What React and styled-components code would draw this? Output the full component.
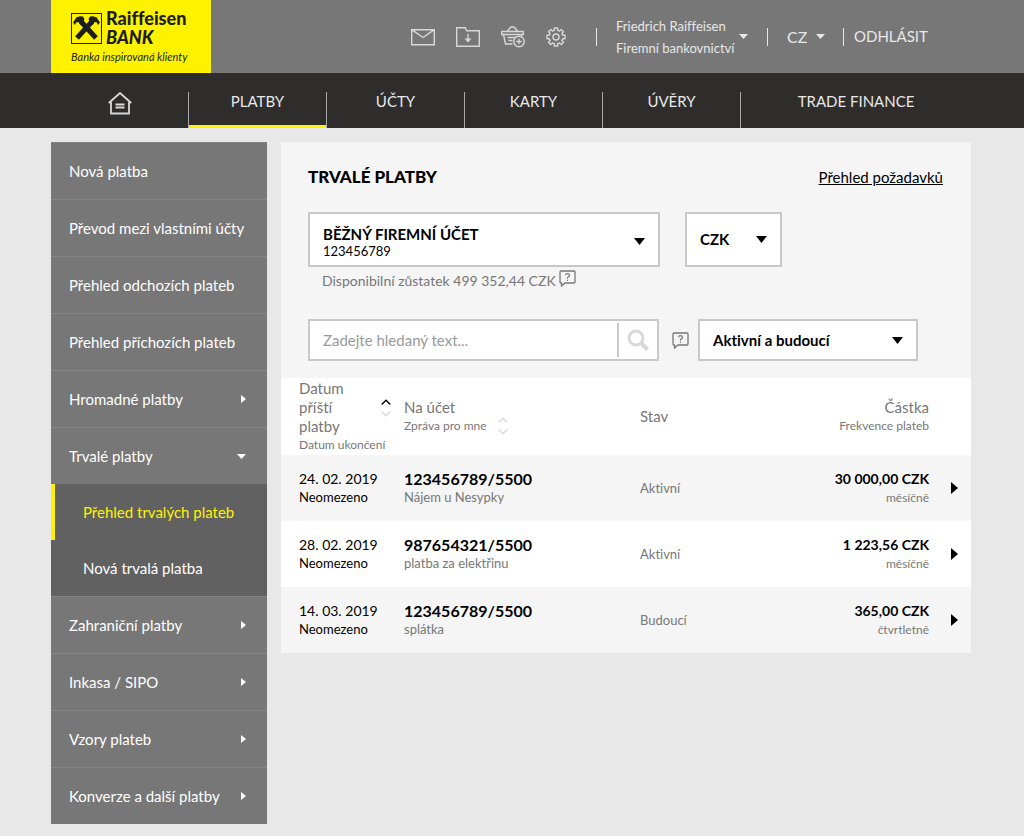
import React, { useState } from 'react'
import styled, { createGlobalStyle, css } from 'styled-components'

const GlobalStyle = createGlobalStyle`
  *, *::before, *::after {
    box-sizing: border-box;
  }

  body {
    margin: 0;
    background: #e8e8e8;
    color: #000;
    font-family: Lato, "Liberation Sans", sans-serif;
    font-size: 16px;
    line-height: 19px;
    font-variant-ligatures: none;
  }

  button, input, select {
    font: inherit;
    font-variant-ligatures: none;
    color: inherit;
    margin: 0;
    padding: 0;
    border: 0;
    background: none;
  }

  button, select {
    cursor: pointer;
  }

  ul {
    list-style: none;
    margin: 0;
    padding: 0;
  }
`

/* ---------- header ---------- */

const TopBar = styled.header`
  display: flex;
  align-items: stretch;
  justify-content: space-between;
  min-height: 73px;
  padding: 0 99px 0 51px;
  background: #777;
  color: #e8e8e8;
`

const Logo = styled.a`
  display: grid;
  grid-template-columns: 31px auto;
  align-content: start;
  align-items: center;
  column-gap: 4px;
  width: 160px;
  padding: 9px 0 0 20px;
  background: #fff200;
  color: #1d1d1b;
  text-decoration: none;
`

const LogoName = styled.span`
  display: flex;
  flex-direction: column;
  font-size: 18px;
  line-height: 19px;
  font-weight: 900;
  white-space: nowrap;
`

const LogoClaim = styled.span`
  grid-column: 1 / -1;
  font-size: 11px;
  line-height: 19px;
  font-style: italic;
  white-space: nowrap;
`

const Tools = styled.div`
  display: flex;
  align-items: center;
`

const IconBar = styled.nav`
  display: flex;
  align-items: center;
  gap: 21px;
  padding-right: 30px;
`

const IconButton = styled.button`
  display: flex;
`

const ToolBlock = styled.div`
  display: flex;
  align-items: center;
  gap: 9px;
  width: ${props => props.$width}px;
  padding-left: ${props => props.$indent}px;
  background: linear-gradient(#e8e8e8, #e8e8e8) left center / 1px 18px no-repeat;
`

const UserButton = styled.button`
  display: flex;
  align-items: center;
  gap: 5px;
  font-size: 13px;
  line-height: 22px;
  text-align: left;
  white-space: nowrap;
`

const LangSelect = styled.select`
  appearance: none;
  width: 20px;
`

const LogoutLink = styled.a`
  color: inherit;
  font-size: 15px;
  text-decoration: none;
`

/* ---------- main menu ---------- */

const MainNav = styled.nav`
  padding: 19px 53px 0 51px;
  background: #2e2d2c;

  ul {
    display: flex;
  }

  li {
    flex: 0 1 138px;
    border-left: 1px solid #aaa;
  }

  li:first-child {
    flex-basis: 137px;
    border-left: 0;
  }

  li:last-child {
    flex: 1 1 231px;
  }
`

const NavLink = styled.a`
  display: flex;
  justify-content: center;
  height: 36px;
  border-bottom: 3px solid ${props => (props.$active ? '#fff200' : 'transparent')};
  color: #e8e8e8;
  font-size: 15px;
  text-decoration: none;
  white-space: nowrap;
`

/* ---------- side menu ---------- */

const Page = styled.div`
  display: flex;
  align-items: flex-start;
  gap: 14px;
  padding: 14px 53px 12px 51px;
`

const SideMenu = styled.nav`
  flex: 0 0 216px;
  background: #777;
  color: #fff;
  font-size: 15px;
`

const SideLink = styled.a`
  display: flex;
  align-items: center;
  justify-content: space-between;
  height: 57px;
  padding: 0 21px 0 18px;
  border-top: 1px solid #848484;
  color: inherit;
  text-decoration: none;
  white-space: nowrap;
`

const SubMenu = styled.ul`
  background: #616161;
`

const SubLink = styled.a`
  display: flex;
  align-items: center;
  height: 56px;
  padding-left: 28px;
  border-left: 4px solid transparent;
  color: inherit;
  text-decoration: none;
  ${props => props.$active && css`
    border-color: #fff200;
    color: #fff200;
  `}
`

/* ---------- content ---------- */

const Content = styled.main`
  flex: 1;
  min-width: 0;
  background: #f5f5f5;
`

const Filters = styled.section`
  padding: 25px 28px 17px 27px;
`

const TitleRow = styled.div`
  display: flex;
  justify-content: space-between;
  align-items: center;
  margin-bottom: 25px;
`

const Title = styled.h1`
  margin: 0;
  font-size: 17px;
  line-height: 20px;
  font-weight: 900;
`

const TextLink = styled.a`
  color: #000;
  font-size: 15px;
`

const FieldRow = styled.div`
  display: flex;
  align-items: center;
  gap: ${props => props.$gap}px;
`

const SelectBox = styled.label`
  display: grid;
  align-content: center;
  flex: 0 1 ${props => props.$width}px;
  height: ${props => props.$height}px;
  border: 2px solid #c8c8c8;
  background: #fff;

  &:has(small) {
    padding-top: 3px;
  }

  select {
    grid-area: 1 / 1;
    appearance: none;
    min-width: 0;
    padding-left: 13px;
    font-size: 15px;
    font-weight: 700;
  }

  svg {
    grid-row: 1 / span 2;
    grid-column: 1;
    place-self: center end;
    margin-right: 13px;
    pointer-events: none;
  }

  small {
    grid-area: 2 / 1;
    padding-left: 13px;
    font-size: 13px;
    line-height: 14px;
  }
`

const Balance = styled.p`
  display: flex;
  align-items: flex-start;
  gap: 3px;
  margin: 3px 0 27px 14px;
  color: #777;
  font-size: 14px;
  line-height: 22px;
`

const SearchBox = styled.form`
  display: flex;
  align-items: center;
  flex: 0 1 351px;
  height: 42px;
  margin-right: 4px;
  border: 2px solid #c8c8c8;
  background: #fff;

  input {
    flex: 1;
    min-width: 0;
    height: 34px;
    padding-left: 13px;
    border-right: 2px solid #c8c8c8;
    font-size: 15px;
    outline: 0;
  }

  input::placeholder {
    color: #999;
    opacity: 1;
  }

  button {
    display: flex;
    justify-content: center;
    width: 38px;
  }
`

/* ---------- table ---------- */

const Table = styled.table`
  width: 100%;
  table-layout: fixed;
  border-collapse: collapse;
  color: #777;
  font-size: 13px;

  th, td {
    padding: 0;
    text-align: left;
    font-weight: 400;
  }

  th {
    height: 77px;
    background: #fff;
    font-size: 15px;
    line-height: 19px;
  }

  td {
    height: 66px;
  }

  tbody tr:nth-child(even) {
    background: #fff;
  }

  th:first-child, td:first-child {
    padding-left: 18px;
  }

  th:nth-child(4), td:nth-child(4) {
    text-align: right;
  }
`

const Col = styled.col`
  width: ${props => props.$width};
`

const HeadGroup = styled.div`
  display: flex;
  align-items: center;
  justify-content: ${props => (props.$spread ? 'space-between' : 'flex-start')};
  gap: 11px;
  padding-right: ${props => (props.$spread ? 13 : 0)}px;
`

const HeadLabel = styled.span`
  display: block;
  max-width: ${props => (props.$narrow ? '60px' : 'none')};
`

const Sub = styled.span`
  display: block;
  font-size: 12px;
  line-height: 18px;
  white-space: nowrap;
`

const Line = styled.span`
  display: block;
  color: ${props => (props.$dark ? '#000' : 'inherit')};
  font-size: ${props => props.$size || 13}px;
  font-weight: ${props => (props.$bold ? 700 : 400)};
  line-height: 19px;
  white-space: nowrap;
`

const RowButton = styled.button`
  display: flex;
  margin-left: 22px;
  color: #000;
`

/* ---------- icons ---------- */

const Caret = ({ size = 9 }) => (
  <svg width={size} height={size === 9 ? 5 : 7} viewBox="0 0 10 6" preserveAspectRatio="none" aria-hidden="true">
    <path d="M0 0h10L5 6z" fill="currentColor" />
  </svg>
)

const ArrowRight = ({ big }) => (
  <svg width={big ? 7 : 5} height={big ? 12 : 8} viewBox="0 0 6 10" preserveAspectRatio="none" aria-hidden="true">
    <path d="M0 0v10l6-5z" fill="currentColor" />
  </svg>
)

const HelpIcon = () => (
  <svg width="17" height="17" viewBox="0 0 17 17" fill="none" stroke="#777" aria-hidden="true">
    <path d="M2 1h13q1 0 1 1v10q0 1-1 1H6l-3.500 3V13H2q-1 0-1-1V2q0-1 1-1z" strokeWidth="1.300" />
    <path d="M6.500 5.300q.2-1.600 2-1.600t2 1.500q0 1-1 1.500t-1 1.500v.5M8.500 9.800v1.200" strokeWidth="1.200" />
  </svg>
)

const SortIcon = ({ up }) => (
  <svg width="10" height="18" viewBox="0 0 10 18" fill="none" strokeWidth="1.400" aria-hidden="true">
    <path d="M.7 5.500L5 1.200 9.300 5.500" stroke={up ? '#000' : '#d8d8d8'} />
    <path d="M.7 12.500L5 16.800 9.300 12.500" stroke="#d8d8d8" />
  </svg>
)

const SearchIcon = () => (
  <svg width="22" height="22" viewBox="0 0 22 22" fill="none" stroke="#d8d8d8" aria-hidden="true">
    <circle cx="9" cy="9" r="7" strokeWidth="3" />
    <path d="M14 14l6.500 6.500" strokeWidth="4" />
  </svg>
)

const CrossLogo = () => (
  <svg width="31" height="31" viewBox="0 0 31 31" aria-hidden="true">
    <rect x=".5" y=".5" width="30" height="30" fill="none" stroke="#1d1d1b" />
    <path d="M9.500 8L25 25M21.500 8L6 25" fill="none" stroke="#1d1d1b" strokeWidth="5" />
    <path
      d="M2 9.500L4.500 6 5 4.500l4-1.300 3 .3 1.500 2.500-1 3-3 3L7.500 9 5 9.500 4 12zM29 9.500L26.500 6 26 4.500l-4-1.300-3 .3L17.500 6l1 3 3 3 2-3 2.500.5 1 2.500z"
      fill="#1d1d1b"
    />
  </svg>
)

const lineIcon = {
  fill: 'none',
  stroke: '#d8d8d8',
  strokeWidth: 1.4,
  'aria-hidden': true
}

const MailIcon = () => (
  <svg width="24" height="18" viewBox="0 0 24 18" {...lineIcon}>
    <path d="M.7 1.700h22.600v15H.7zM.7 1.700L12 9.500 23.300 1.700" />
  </svg>
)

const FolderIcon = () => (
  <svg width="24" height="20" viewBox="0 0 24 20" {...lineIcon}>
    <path d="M.7.7h8.500l1.500 3h12.600v15.600H.7z" />
    <path d="M12 7v7" />
    <path d="M8.500 11.500h7L12 15.500z" fill="#d8d8d8" stroke="none" />
  </svg>
)

const BasketIcon = () => (
  <svg width="24" height="22" viewBox="0 0 24 22" {...lineIcon}>
    <path d="M6 5.500L10 1h3l4 4.500M.7 5.500h21.600v3H.7zM2.500 8.500l2 9.500h7M20.800 8.500l-.4 2M6.500 11.500h8.500M7.500 14.500h4" />
    <circle cx="18" cy="15.500" r="5.200" />
    <path d="M18 12.800v5.400M15.300 15.500h5.400" />
  </svg>
)

const GearIcon = () => (
  <svg width="20" height="20" viewBox="0 0 20 20" {...lineIcon} strokeLinejoin="round">
    <path d="M8.300 1h3.400v2.300l1.900.8 1.600-1.600 2.300 2.300-1.600 1.600.8 1.900H19v3.400h-2.300l-.8 1.900 1.600 1.600-2.300 2.300-1.600-1.600-1.900.8V19H8.300v-2.300l-1.900-.8-1.600 1.600-2.300-2.300 1.600-1.600-.8-1.900H1V8.300h2.300l.8-1.900-1.600-1.600 2.300-2.300 1.600 1.600 1.900-.8z" />
    <circle cx="10" cy="10" r="3" />
  </svg>
)

const HomeIcon = () => (
  <svg width="24" height="23" viewBox="0 0 24 23" fill="none" stroke="#d8d8d8" strokeWidth="1.800" aria-hidden="true">
    <path d="M.8 11L12 1 23.200 11M3 9.500v12h18v-12M7.500 12.500h9M7.500 15.500h9" />
  </svg>
)

/* ---------- data ---------- */

const navItems = ['PLATBY', 'ÚČTY', 'KARTY', 'ÚVĚRY', 'TRADE FINANCE']

const sideItems = [
  { label: 'Nová platba' },
  { label: 'Převod mezi vlastními účty' },
  { label: 'Přehled odchozích plateb' },
  { label: 'Přehled příchozích plateb' },
  { label: 'Hromadné platby', more: true },
  { label: 'Trvalé platby', children: ['Přehled trvalých plateb', 'Nová trvalá platba'] },
  { label: 'Zahraniční platby', more: true },
  { label: 'Inkasa / SIPO', more: true },
  { label: 'Vzory plateb', more: true },
  { label: 'Konverze a další platby', more: true }
]

const payments = [
  { date: '24. 02. 2019', end: 'Neomezeno', account: '123456789/5500', note: 'Nájem u Nesypky', state: 'Aktivní', amount: '30 000,00 CZK', freq: 'měsíčně' },
  { date: '28. 02. 2019', end: 'Neomezeno', account: '987654321/5500', note: 'platba za elektřinu', state: 'Aktivní', amount: '1 223,56 CZK', freq: 'měsíčně' },
  { date: '14. 03. 2019', end: 'Neomezeno', account: '123456789/5500', note: 'splátka', state: 'Budoucí', amount: '365,00 CZK', freq: 'čtvrtletně' }
]

function Header() {
  return (
    <TopBar>
      <Logo href="#">
        <CrossLogo />
        <LogoName>
          <span>Raiffeisen</span>
          <em>BANK</em>
        </LogoName>
        <LogoClaim>Banka inspirovaná klienty</LogoClaim>
      </Logo>
      <Tools>
        <IconBar>
          <IconButton aria-label="Zprávy"><MailIcon /></IconButton>
          <IconButton aria-label="Dokumenty"><FolderIcon /></IconButton>
          <IconButton aria-label="Košík"><BasketIcon /></IconButton>
          <IconButton aria-label="Nastavení"><GearIcon /></IconButton>
        </IconBar>
        <ToolBlock $width={171} $indent={20}>
          <UserButton>
            <span>Friedrich Raiffeisen<br />Firemní bankovnictví</span>
            <Caret />
          </UserButton>
        </ToolBlock>
        <ToolBlock $width={76} $indent={20}>
          <LangSelect aria-label="Jazyk"><option>CZ</option></LangSelect>
          <Caret />
        </ToolBlock>
        <ToolBlock $width={82} $indent={11}>
          <LogoutLink href="#">ODHLÁSIT</LogoutLink>
        </ToolBlock>
      </Tools>
    </TopBar>
  )
}

function Sidebar() {
  return (
    <SideMenu>
      <ul>
        {sideItems.map(item => (
          <li key={item.label}>
            <SideLink href="#">
              {item.label}
              {item.more && <ArrowRight />}
              {item.children && <Caret />}
            </SideLink>
            {item.children && (
              <SubMenu>
                {item.children.map((child, i) => (
                  <li key={child}><SubLink href="#" $active={i === 0}>{child}</SubLink></li>
                ))}
              </SubMenu>
            )}
          </li>
        ))}
      </ul>
    </SideMenu>
  )
}

function PaymentFilters() {
  const [query, setQuery] = useState('')

  return (
    <Filters>
      <TitleRow>
        <Title>TRVALÉ PLATBY</Title>
        <TextLink href="#">Přehled požadavků</TextLink>
      </TitleRow>
      <FieldRow $gap={25}>
        <SelectBox $width={352} $height={55}>
          <select aria-label="Účet"><option>BĚŽNÝ FIREMNÍ ÚČET</option></select>
          <small>123456789</small>
          <Caret size={11} />
        </SelectBox>
        <SelectBox $width={97} $height={55}>
          <select aria-label="Měna"><option>CZK</option></select>
          <Caret size={11} />
        </SelectBox>
      </FieldRow>
      <Balance>
        Disponibilní zůstatek 499 352,44 CZK
        <IconButton aria-label="Nápověda k zůstatku"><HelpIcon /></IconButton>
      </Balance>
      <FieldRow $gap={9}>
        <SearchBox onSubmit={e => e.preventDefault()}>
          <input
            aria-label="Hledat"
            placeholder="Zadejte hledaný text..."
            value={query}
            onChange={e => setQuery(e.target.value)}
          />
          <button aria-label="Hledat"><SearchIcon /></button>
        </SearchBox>
        <IconButton aria-label="Nápověda k hledání"><HelpIcon /></IconButton>
        <SelectBox $width={220} $height={42}>
          <select aria-label="Stav plateb"><option>Aktivní a budoucí</option></select>
          <Caret size={11} />
        </SelectBox>
      </FieldRow>
    </Filters>
  )
}

function PaymentTable() {
  return (
    <Table>
      <colgroup>
        <Col $width="123px" />
        <Col $width="236px" />
        <Col $width="auto" />
        <Col $width="160px" />
        <Col $width="42px" />
      </colgroup>
      <thead>
        <tr>
          <th>
            <HeadGroup $spread>
              <HeadLabel $narrow>Datum příští platby</HeadLabel>
              <SortIcon up />
            </HeadGroup>
            <Sub>Datum ukončení</Sub>
          </th>
          <th>
            <HeadLabel>Na účet</HeadLabel>
            <HeadGroup>
              <Sub>Zpráva pro mne</Sub>
              <SortIcon />
            </HeadGroup>
          </th>
          <th>Stav</th>
          <th>
            <HeadLabel>Částka</HeadLabel>
            <Sub>Frekvence plateb</Sub>
          </th>
          <th aria-label="Detail" />
        </tr>
      </thead>
      <tbody>
        {payments.map(p => (
          <tr key={p.date}>
            <td>
              <Line $dark $size={14}>{p.date}</Line>
              <Line $dark>{p.end}</Line>
            </td>
            <td>
              <Line $dark $bold $size={16}>{p.account}</Line>
              <Line>{p.note}</Line>
            </td>
            <td>{p.state}</td>
            <td>
              <Line $dark $bold $size={14}>{p.amount}</Line>
              <Line $size={12}>{p.freq}</Line>
            </td>
            <td>
              <RowButton aria-label={'Detail platby ' + p.account}><ArrowRight big /></RowButton>
            </td>
          </tr>
        ))}
      </tbody>
    </Table>
  )
}

export default function App() {
  return (
    <>
      <GlobalStyle />
      <Header />
      <MainNav>
        <ul>
          <li><NavLink href="#" aria-label="Domů"><HomeIcon /></NavLink></li>
          {navItems.map((item, i) => (
            <li key={item}><NavLink href="#" $active={i === 0}>{item}</NavLink></li>
          ))}
        </ul>
      </MainNav>
      <Page>
        <Sidebar />
        <Content>
          <PaymentFilters />
          <PaymentTable />
        </Content>
      </Page>
    </>
  )
}
